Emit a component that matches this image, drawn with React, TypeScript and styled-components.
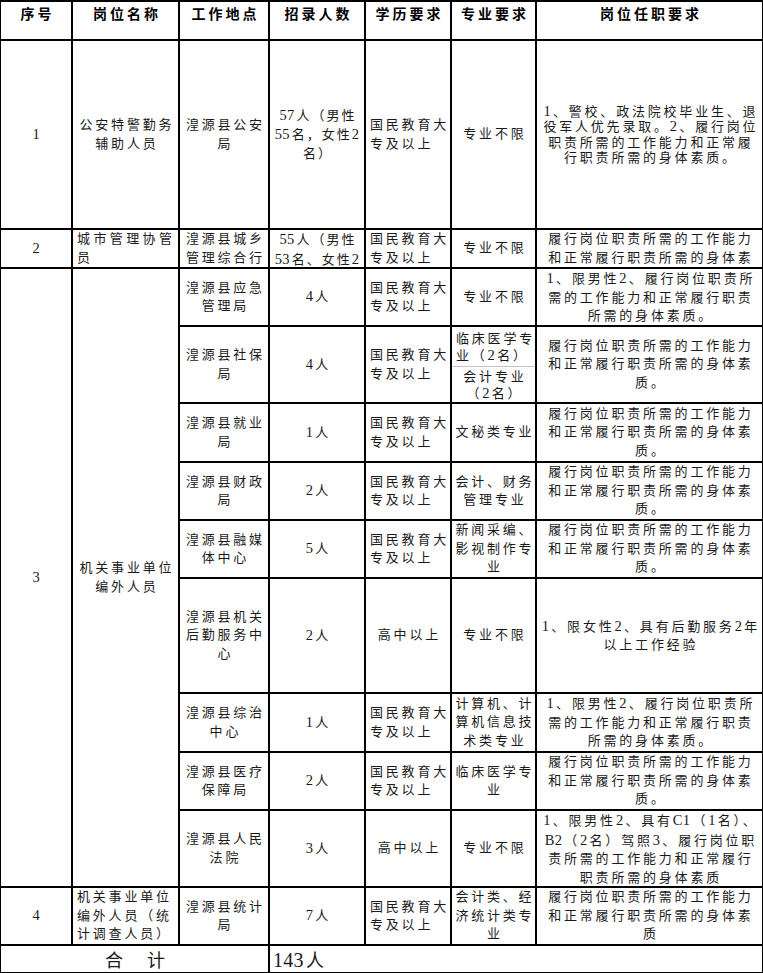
import React from "react"
import styled, { createGlobalStyle } from "styled-components"

const GlobalStyle = createGlobalStyle`
  html, body {
    margin: 0;
    padding: 0;
    background: #fff;
  }
  body {
    font-family: "Liberation Serif", "Noto Sans CJK SC", serif;
    color: #1a1a1a;
  }
`

// spreadsheet grid: black background shows through the gaps as cell borders
const Sheet = styled.div`
  display: grid;
  width: 763px;
  box-sizing: border-box;
  grid-template-columns: 70px 105px 88px 94px 84px 83px 225px;
  grid-template-rows: 37px 187px 37px 56px 75px 57px 56px 56px 113px 57px 56px 75px 56px 26px;
  gap: 2px;
  padding: 2px 1px 1px 1px;
  background: #000;
`

type Align = "left" | "center"

const Cell = styled.div<{ $rows?: number; $cols?: number; $align?: Align }>`
  grid-row: span ${(p) => p.$rows ?? 1};
  grid-column: span ${(p) => p.$cols ?? 1};
  background: #fff;
  display: flex;
  flex-direction: column;
  justify-content: safe center;
  align-items: ${(p) => (p.$align === "left" ? "flex-start" : "center")};
  padding: 0 ${(p) => (p.$align === "left" ? "4px" : "2px")};
  overflow: hidden;
  font-size: 13px;
  line-height: 18.5px;
`

const HeadCell = styled(Cell)`
  justify-content: flex-start;
  padding-top: 2px;
  font-family: "Noto Sans CJK SC", sans-serif;
  font-size: 14px;
  font-weight: 700;
  line-height: 18px;
  color: #000;
`

const TotalCell = styled(Cell)`
  justify-content: flex-end;
  font-size: 18px;
  line-height: 22px;
  padding-left: 3px;
`

const SplitCell = styled(Cell)`
  padding: 0;
  align-items: stretch;
  justify-content: flex-start;
`

const Half = styled.div<{ $top?: boolean; $align?: Align }>`
  display: flex;
  flex-direction: column;
  justify-content: center;
  align-items: ${(p) => (p.$align === "left" ? "flex-start" : "center")};
  padding: 0 ${(p) => (p.$align === "left" ? "4px" : "2px")};
  line-height: 17px;
  ${(p) => (p.$top ? "height: 39px;" : "flex: 1; border-top: 1px solid #c4c4c4;")}
`

const Line = styled.span<{ $lh?: number; $gap?: number }>`
  display: block;
  white-space: nowrap;
  letter-spacing: ${(p) => p.$gap ?? 2.8}px;
  margin-right: -${(p) => p.$gap ?? 2.8}px;
  ${(p) => (p.$lh ? `line-height: ${p.$lh}px;` : "")}
`

// digits and latin letters sit tighter and a bit larger than the CJK glyphs
const Latin = styled.span<{ $big?: boolean }>`
  font-size: ${(p) => (p.$big ? "20px" : "14.5px")};
  letter-spacing: 0.3px;
  margin-right: 2px;
`

const Rich = ({ text, big }: { text: string; big?: boolean }) => (
  <>
    {text.split(/([A-Za-z0-9]+)/).map((part, i) =>
      i % 2 === 1 ? (
        <Latin key={i} $big={big}>
          {part}
        </Latin>
      ) : (
        part
      )
    )}
  </>
)

const Lines = ({ items, lh, gap }: { items: string[]; lh?: number; gap?: number }) => (
  <>
    {items.map((t, i) => (
      <Line key={i} $lh={lh} $gap={gap}>
        <Rich text={t} />
      </Line>
    ))}
  </>
)

const HEADERS = ["序号", "岗位名称", "工作地点", "招录人数", "学历要求", "专业要求", "岗位任职要求"]

const EDU = ["国民教育大", "专及以上"]
const HIGH = ["高中以上"]
const ANY = ["专业不限"]
const DUTY = ["履行岗位职责所需的工作能力", "和正常履行职责所需的身体素", "质。"]
const DUTY_MALE = ["1、限男性2、履行岗位职责所", "需的工作能力和正常履行职责", "所需的身体素质。"]

interface Job {
  place: string[]
  count: string
  edu: string[]
  major?: string[]
  split?: { top: string[]; bottom: string[] }
  duty: string[]
}

const JOBS: Job[] = [
  { place: ["湟源县应急", "管理局"], count: "4人", edu: EDU, major: ANY, duty: DUTY_MALE },
  {
    place: ["湟源县社保", "局"],
    count: "4人",
    edu: EDU,
    split: { top: ["临床医学专", "业（2名）"], bottom: ["会计专业", "（2名）"] },
    duty: DUTY,
  },
  { place: ["湟源县就业", "局"], count: "1人", edu: EDU, major: ["文秘类专业"], duty: DUTY },
  { place: ["湟源县财政", "局"], count: "2人", edu: EDU, major: ["会计、财务", "管理专业"], duty: DUTY },
  {
    place: ["湟源县融媒", "体中心"],
    count: "5人",
    edu: EDU,
    major: ["新闻采编、", "影视制作专", "业"],
    duty: DUTY,
  },
  {
    place: ["湟源县机关", "后勤服务中", "心"],
    count: "2人",
    edu: HIGH,
    major: ANY,
    duty: ["1、限女性2、具有后勤服务2年", "以上工作经验"],
  },
  {
    place: ["湟源县综治", "中心"],
    count: "1人",
    edu: EDU,
    major: ["计算机、计", "算机信息技", "术类专业"],
    duty: DUTY_MALE,
  },
  { place: ["湟源县医疗", "保障局"], count: "2人", edu: EDU, major: ["临床医学专", "业"], duty: DUTY },
  {
    place: ["湟源县人民", "法院"],
    count: "3人",
    edu: HIGH,
    major: ANY,
    duty: ["1、限男性2、具有C1（1名）、", "B2（2名）驾照3、履行岗位职", "责所需的工作能力和正常履行", "职责所需的身体素质"],
  },
]

const eduAlign = (edu: string[]): Align => (edu.length > 1 ? "left" : "center")

const JobRow = ({ job }: { job: Job }) => (
  <>
    <Cell>
      <Lines items={job.place} />
    </Cell>
    <Cell>
      <Lines items={[job.count]} />
    </Cell>
    <Cell $align={eduAlign(job.edu)}>
      <Lines items={job.edu} />
    </Cell>
    {job.split ? (
      <SplitCell>
        <Half $top $align="left">
          <Lines items={job.split.top} />
        </Half>
        <Half>
          <Lines items={job.split.bottom} />
        </Half>
      </SplitCell>
    ) : (
      <Cell>
        <Lines items={job.major ?? []} />
      </Cell>
    )}
    <Cell>
      <Lines items={job.duty} />
    </Cell>
  </>
)

const App = () => {
  return (
    <>
      <GlobalStyle />
      <Sheet>
        {HEADERS.map((h) => (
          <HeadCell key={h}>
            <Line $gap={3}>{h}</Line>
          </HeadCell>
        ))}

        <Cell>
          <Lines items={["1"]} />
        </Cell>
        <Cell>
          <Lines items={["公安特警勤务", "辅助人员"]} />
        </Cell>
        <Cell>
          <Lines items={["湟源县公安", "局"]} />
        </Cell>
        <Cell>
          <Lines items={["57人（男性", "55名，女性2", "名）"]} lh={19} gap={2} />
        </Cell>
        <Cell $align="left">
          <Lines items={EDU} />
        </Cell>
        <Cell>
          <Lines items={ANY} />
        </Cell>
        <Cell>
          <Lines
            items={["1、警校、政法院校毕业生、退", "役军人优先录取。2、履行岗位", "职责所需的工作能力和正常履", "行职责所需的身体素质。"]}
            lh={15.5}
          />
        </Cell>

        <Cell>
          <Lines items={["2"]} />
        </Cell>
        <Cell $align="left">
          <Lines items={["城市管理协管", "员"]} gap={3.4} />
        </Cell>
        <Cell>
          <Lines items={["湟源县城乡", "管理综合行"]} />
        </Cell>
        <Cell>
          <Lines items={["55人（男性", "53名、女性2"]} gap={2} />
        </Cell>
        <Cell $align="left">
          <Lines items={EDU} />
        </Cell>
        <Cell>
          <Lines items={ANY} />
        </Cell>
        <Cell>
          <Lines items={["履行岗位职责所需的工作能力", "和正常履行职责所需的身体素"]} />
        </Cell>

        <Cell $rows={9}>
          <Lines items={["3"]} />
        </Cell>
        <Cell $rows={9}>
          <Lines items={["机关事业单位", "编外人员"]} />
        </Cell>
        {JOBS.map((job, i) => (
          <JobRow key={i} job={job} />
        ))}

        <Cell>
          <Lines items={["4"]} />
        </Cell>
        <Cell $align="left">
          <Lines items={["机关事业单位", "编外人员（统", "计调查人员）"]} />
        </Cell>
        <JobRow
          job={{
            place: ["湟源县统计", "局"],
            count: "7人",
            edu: EDU,
            major: ["会计类、经", "济统计类专", "业"],
            duty: ["履行岗位职责所需的工作能力", "和正常履行职责所需的身体素", "质"],
          }}
        />

        <TotalCell $cols={3}>
          <Line $gap={3}>合　计</Line>
        </TotalCell>
        <TotalCell $cols={4} $align="left">
          <Line $gap={0}>
            <Rich text="143人" big />
          </Line>
        </TotalCell>
      </Sheet>
    </>
  )
}

export default App
